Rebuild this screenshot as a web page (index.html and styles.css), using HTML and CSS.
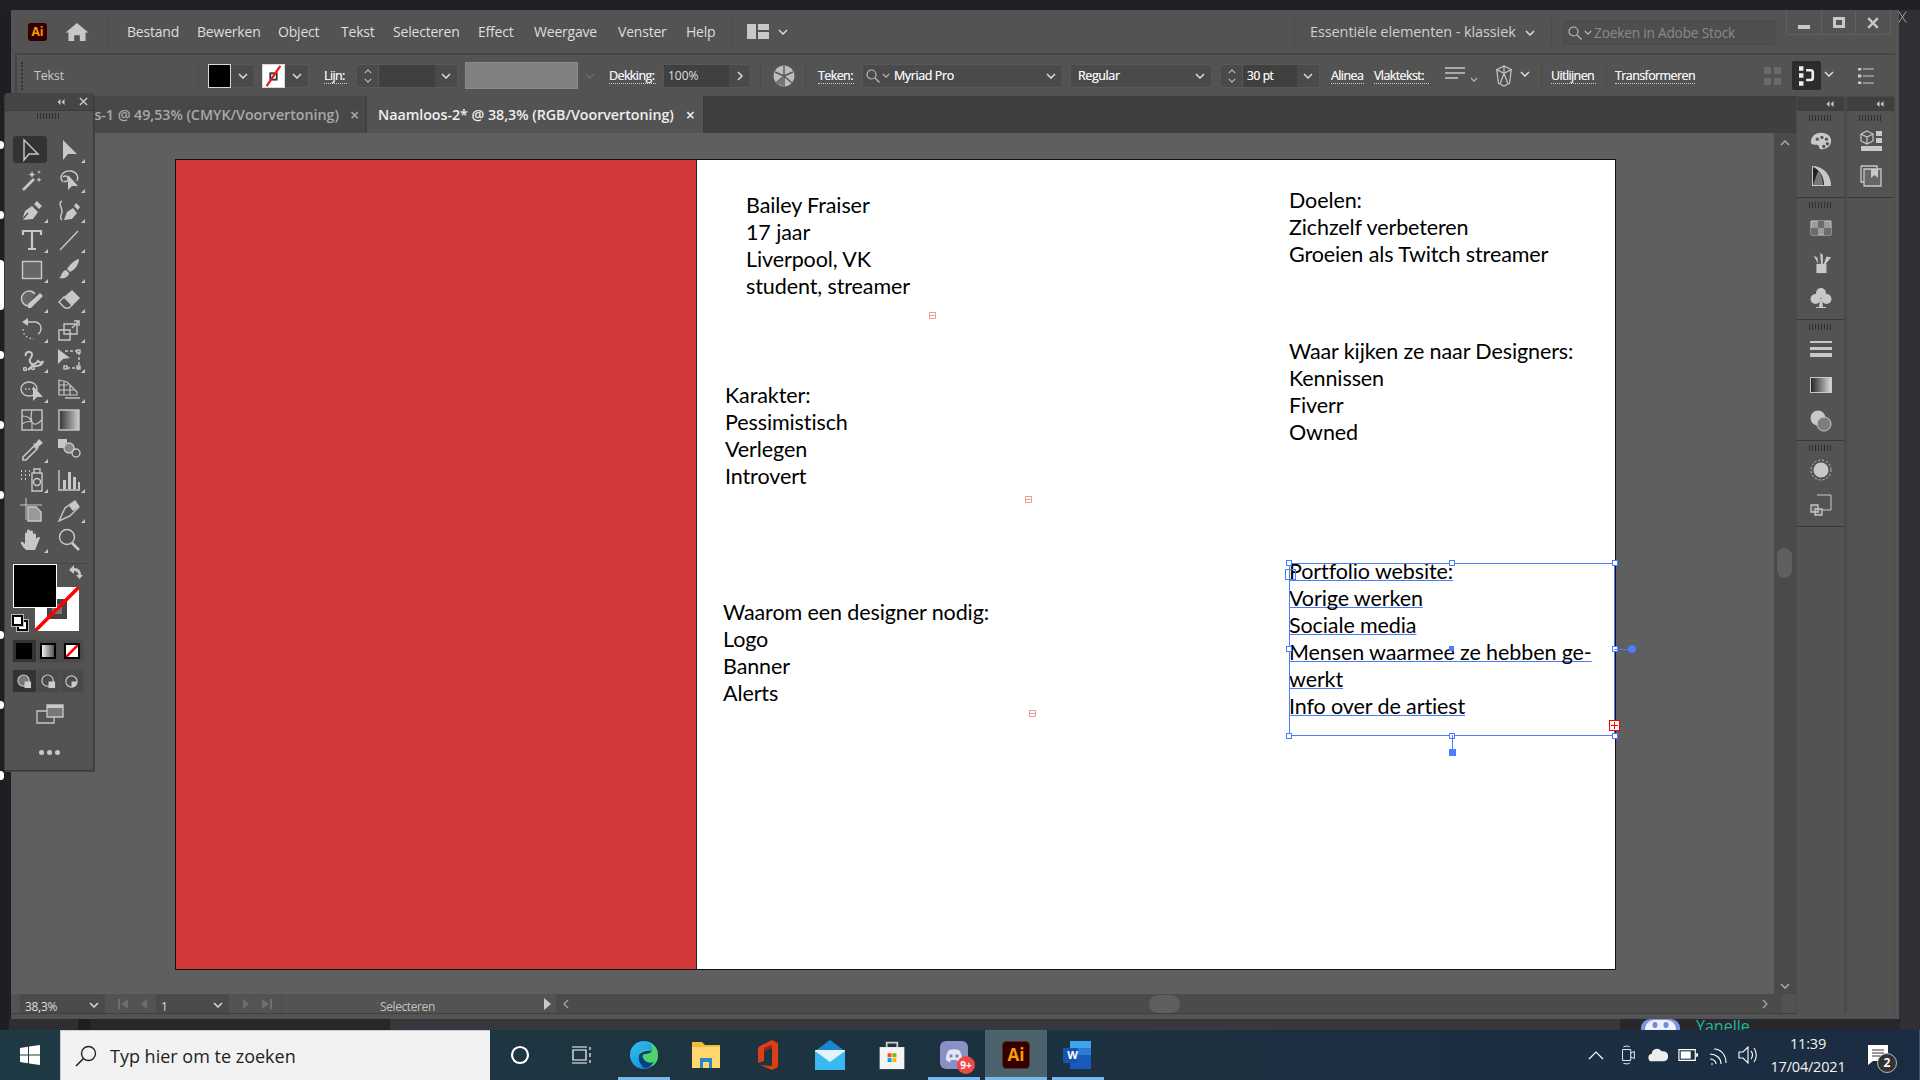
FILE: index.html
```html
<!DOCTYPE html>
<html lang="nl">
<head>
<meta charset="utf-8">
<title>Adobe Illustrator</title>
<link rel="stylesheet" href="styles.css">
</head>
<body>
<svg class="defs" aria-hidden="true">
  <symbol id="chev" viewBox="0 0 10 6"><path d="M1 1l4 4 4-4" fill="none" stroke="currentColor" stroke-width="1.5"/></symbol>
  <symbol id="up" viewBox="0 0 10 6"><path d="M1 5l4-4 4 4" fill="none" stroke="currentColor" stroke-width="1.5"/></symbol>
  <symbol id="mag" viewBox="0 0 14 14"><circle cx="5.5" cy="5.5" r="4.5" fill="none" stroke="currentColor" stroke-width="1.2"/><path d="M9 9l4.5 4.5" stroke="currentColor" stroke-width="1.3"/></symbol>
  <symbol id="dbl" viewBox="0 0 8 6"><path d="M3.5 0L0.5 3l3 3zM7.5 0L4.5 3l3 3z" fill="currentColor"/></symbol>
</svg>

<div class="screen">
  <div class="band-top"></div>
  <div class="mid">
    <div class="edge-left"></div>
    <main class="window">
      <header class="menubar">
        <div class="ai-logo">Ai</div>
        <svg class="home" viewBox="0 0 24 19"><path d="M12 0L0 10h3v9h6v-6h6v6h6v-9h3z" fill="#c8c8c8"/></svg>
        <span class="vsep sep-a"></span>
        <nav class="menu">
          <span class="m1">Bestand</span><span class="m2">Bewerken</span><span class="m3">Object</span><span class="m4">Tekst</span><span class="m5">Selecteren</span><span class="m6">Effect</span><span class="m7">Weergave</span><span class="m8">Venster</span><span class="m9">Help</span>
        </nav>
        <span class="vsep sep-b"></span>
        <svg class="layout-ic" viewBox="0 0 22 15"><path d="M0 0h9v15H0zM11 0h11v6H11zM11 8h11v7H11z" fill="#c8c8c8"/></svg>
        <svg class="chev-s layout-chev"><use href="#chev"/></svg>
        <span class="vsep sep-c"></span>
        <span class="workspace">Essentiële elementen - klassiek</span>
        <svg class="chev-s ws-chev"><use href="#chev"/></svg>
        <span class="vsep sep-d"></span>
        <div class="stock"><svg class="mag"><use href="#mag"/></svg><svg class="chev-t"><use href="#chev"/></svg><span>Zoeken in Adobe Stock</span></div>
        <div class="winbtns">
          <span class="wb"><i class="wb-min"></i></span>
          <span class="wb wb-mid"><i class="wb-max"></i></span>
          <span class="wb"><svg class="wb-x" viewBox="0 0 10 10"><path d="M1 1l8 8M9 1l-8 8" stroke="#c8c8c8" stroke-width="2"/></svg></span>
        </div>
      </header>

      <section class="options">
        <span class="grip-v"></span>
        <span class="o-tekst">Tekst</span>
        <div class="combo o-fill"><span class="swatch swatch-k"></span><svg class="chev-s"><use href="#chev"/></svg></div>
        <div class="combo o-stroke"><span class="swatch swatch-none"><svg viewBox="0 0 23 24"><rect x="8" y="9" width="7" height="7" fill="none" stroke="#333" stroke-width="2"/><path d="M4 23L19 1" stroke="#e81c1c" stroke-width="2.5"/></svg></span><svg class="chev-s"><use href="#chev"/></svg></div>
        <span class="lbl o-lijn">Lijn:</span>
        <div class="combo o-weight"><span class="stepper"><svg class="chev-t"><use href="#up"/></svg><svg class="chev-t"><use href="#chev"/></svg></span><span class="fld"></span><svg class="chev-s"><use href="#chev"/></svg></div>
        <div class="profile"></div>
        <svg class="chev-s chev-dim"><use href="#chev"/></svg>
        <span class="lbl o-dek">Dekking:</span>
        <div class="combo o-opac"><span class="fld fld-text">100%</span><svg class="chev-r" viewBox="0 0 6 10"><path d="M1 1l4 4-4 4" fill="none" stroke="#ddd" stroke-width="1.5"/></svg></div>
        <span class="vsep o-sep1"></span>
        <svg class="o-globe" viewBox="0 0 22 22"><circle cx="11" cy="11" r="10.5" fill="#bdbdbd"/><path d="M11 11L11 1M11 11L20 7M11 11L19 18M11 11L11 21M11 11L3 18M11 11L2 7" stroke="#555" stroke-width="1.4"/><path d="M11 11L3 18A10 10 0 0 0 11 21z" fill="#777"/></svg>
        <span class="vsep o-sep2"></span>
        <span class="lbl o-teken">Teken:</span>
        <div class="combo o-font"><svg class="mag"><use href="#mag"/></svg><svg class="chev-t"><use href="#chev"/></svg><span class="fld-name">Myriad Pro</span><svg class="chev-s"><use href="#chev"/></svg></div>
        <div class="combo o-style"><span class="fld-name">Regular</span><svg class="chev-s"><use href="#chev"/></svg></div>
        <div class="combo o-size"><span class="stepper"><svg class="chev-t"><use href="#up"/></svg><svg class="chev-t"><use href="#chev"/></svg></span><span class="fld-name">30 pt</span><svg class="chev-s"><use href="#chev"/></svg></div>
        <span class="lbl o-alinea">Alinea</span>
        <span class="lbl o-vlak">Vlaktekst:</span>
        <svg class="o-lines" viewBox="0 0 20 12"><path d="M0 1h20M0 6h20M0 11h13" stroke="#c8c8c8" stroke-width="1.6"/></svg>
        <svg class="chev-t o-lines-c"><use href="#chev"/></svg>
        <svg class="o-shield" viewBox="0 0 20 24"><path d="M10 1l8 4-2 15-6 3-6-3-2-15zM10 1v8M2 5l8 4 8-4M6 20l4-11 4 11" fill="none" stroke="#bdbdbd" stroke-width="1.4"/></svg>
        <svg class="chev-s o-shield-c"><use href="#chev"/></svg>
        <span class="vsep o-sep3"></span>
        <span class="lbl o-uit">Uitlijnen</span>
        <span class="vsep o-sep4"></span>
        <span class="lbl o-trans">Transformeren</span>
        <svg class="o-grid" viewBox="0 0 17 18"><path d="M0 0h7v7H0zM10 0h7v7h-7zM0 11h7v7H0zM10 11h7v7h-7z" fill="#6a6a6a"/></svg>
        <span class="o-snap"><svg viewBox="0 0 18 22"><path d="M0 0h5v5H0zM0 8h5v5H0zM0 17h5v5H0zM8 3h5a4 4 0 0 1 4 4v6a4 4 0 0 1-4 4H8v-3h5a1 1 0 0 0 1-1V7a1 1 0 0 0-1-1H8z" fill="#eee"/></svg></span>
        <svg class="chev-s o-snap-c"><use href="#chev"/></svg>
        <svg class="o-list" viewBox="0 0 16 16"><path d="M0 0h3v2H0zM5 1h11M0 7h3v2H0zM5 8h11M0 14h3v2H0zM5 15h11" fill="#c8c8c8" stroke="#c8c8c8"/></svg>
      </section>

      <div class="body-row">
        <div class="work">
          <div class="tabs">
            <div class="tab tab-off"><span>Naamloos-1 @ 49,53% (CMYK/Voorvertoning)</span><b>×</b></div>
            <div class="tab tab-on"><span>Naamloos-2* @ 38,3% (RGB/Voorvertoning)</span><b>×</b></div>
          </div>
          <div class="canvas-row">
            <div class="canvas">
              <div class="artboard">
                <div class="red"></div>
                <div class="tb tb-a"><p>Bailey Fraiser</p><p>17 jaar</p><p>Liverpool, VK</p><p>student, streamer</p></div>
                <div class="tb tb-b"><p>Karakter:</p><p>Pessimistisch</p><p>Verlegen</p><p>Introvert</p></div>
                <div class="tb tb-c"><p>Waarom een designer nodig:</p><p>Logo</p><p>Banner</p><p>Alerts</p></div>
                <div class="tb tb-d"><p>Doelen:</p><p>Zichzelf verbeteren</p><p>Groeien als Twitch streamer</p></div>
                <div class="tb tb-e"><p>Waar kijken ze naar Designers:</p><p>Kennissen</p><p>Fiverr</p><p>Owned</p></div>
                <div class="tb tb-f"><p><u>Portfolio website:</u></p><p><u>Vorige werken</u></p><p><u>Sociale media</u></p><p><u>Mensen waarmee ze hebben ge-</u></p><p><u>werkt</u></p><p><u>Info over de artiest</u></p></div>
                <span class="port port-a"></span><span class="port port-b"></span><span class="port port-c"></span>
                <div class="selbox">
                  <i class="h h-tl"></i><i class="h h-tm"></i><i class="h h-tr"></i>
                  <i class="h h-ml"></i><i class="h h-mr"></i>
                  <i class="h h-bl"></i><i class="h h-bm"></i><i class="h h-br"></i>
                  <i class="center-dot"></i>
                  <i class="inport"></i>
                  <i class="outport"></i>
                  <i class="rotline"></i><i class="rotdot"></i>
                  <i class="shline"></i><i class="shsq"></i>
                </div>
              </div>
            </div>
            <div class="vscroll">
              <svg class="chev-s vs-up"><use href="#up"/></svg>
              <span class="vs-thumb"></span>
              <svg class="chev-s vs-down"><use href="#chev"/></svg>
            </div>
          </div>
          <div class="status">
            <div class="st-field st-zoom"><span>38,3%</span><svg class="chev-s"><use href="#chev"/></svg></div>
            <svg class="st-nav st-first" viewBox="0 0 12 12"><path d="M1 1h2v10H1zM11 1v10L4 6z" fill="#6e6e6e"/></svg>
            <svg class="st-nav st-prev" viewBox="0 0 8 12"><path d="M7 1v10L1 6z" fill="#6e6e6e"/></svg>
            <div class="st-field st-page"><span>1</span><svg class="chev-s"><use href="#chev"/></svg></div>
            <svg class="st-nav st-next" viewBox="0 0 8 12"><path d="M1 1v10l6-5z" fill="#6e6e6e"/></svg>
            <svg class="st-nav st-last" viewBox="0 0 12 12"><path d="M1 1v10l7-5zM9 1h2v10H9z" fill="#6e6e6e"/></svg>
            <span class="st-sel">Selecteren</span>
            <svg class="st-arrow" viewBox="0 0 8 12"><path d="M1 0v12l7-6z" fill="#c8c8c8"/></svg>
            <div class="hscroll">
              <svg class="hs-arrow" viewBox="0 0 6 10"><path d="M5 1L1 5l4 4" fill="none" stroke="#aaa" stroke-width="1.2"/></svg>
              <span class="hs-thumb"></span>
              <svg class="hs-arrow" viewBox="0 0 6 10"><path d="M1 1l4 4-4 4" fill="none" stroke="#aaa" stroke-width="1.2"/></svg>
            </div>
          </div>
        </div>

        <aside class="dock">
          <div class="dock-col">
            <div class="dock-head"><svg class="dbl"><use href="#dbl"/></svg></div>
            <div class="dsec ds1"><span class="grip-h"></span>
              <svg class="d-ic" viewBox="0 0 24 20"><path d="M12 1C5 1 1 6 1 11c0 3 3 3 6 3 2 0 3 1 3 3 0 1 1 2 3 2 6 0 10-4 10-9 0-6-5-9-11-9z" fill="#c8c8c8"/><circle cx="8" cy="8" r="1.8" fill="#555"/><circle cx="13" cy="6" r="1.8" fill="#555"/><circle cx="18" cy="8" r="1.8" fill="#555"/><circle cx="19" cy="13" r="1.8" fill="#555"/><circle cx="15" cy="16" r="1.8" fill="#555"/></svg>
              <svg class="d-ic" viewBox="0 0 22 22"><path d="M2 1v20h19C21 9 13 1 2 1z" fill="#c8c8c8"/><path d="M3 2v18L14 20C14 12 10 5 3 2z" fill="#222"/><path d="M3 20L8 6c3 2 5 8 5 14z" fill="#777"/></svg>
            </div>
            <div class="dsec ds2"><span class="grip-h"></span>
              <svg class="d-ic" viewBox="0 0 22 16"><path d="M1 1h20v14H1z" fill="#9a9a9a" stroke="#c8c8c8"/><path d="M8 1h6v7H8zM1 8h7v7H1zM14 8h7v7h-7z" fill="#6c6c6c"/></svg>
              <svg class="d-ic" viewBox="0 0 22 24"><path d="M6 13h11v10H6z" fill="#c8c8c8"/><path d="M8 13L3 4l4 2zM11 13L10 1l3 2v10zM14 13l3-8 5 1-6 7z" fill="#c8c8c8"/></svg>
              <svg class="d-ic" viewBox="0 0 22 22"><circle cx="11" cy="6" r="5" fill="#c8c8c8"/><circle cx="5.5" cy="12" r="5" fill="#c8c8c8"/><circle cx="16.5" cy="12" r="5" fill="#c8c8c8"/><path d="M10 12h2l1 8h3v1H6v-1h3z" fill="#c8c8c8"/></svg>
            </div>
            <div class="dsec ds3"><span class="grip-h"></span>
              <svg class="d-ic" viewBox="0 0 22 16"><path d="M0 0h22v2H0zM0 6h22v3H0zM0 12h22v4H0z" fill="#c8c8c8"/></svg>
              <svg class="d-ic" viewBox="0 0 22 16"><defs><linearGradient id="g1"><stop offset="0" stop-color="#222"/><stop offset="1" stop-color="#ddd"/></linearGradient></defs><rect x=".5" y=".5" width="21" height="15" fill="url(#g1)" stroke="#c8c8c8"/></svg>
              <svg class="d-ic" viewBox="0 0 22 22"><circle cx="8" cy="8" r="7.5" fill="#c8c8c8"/><circle cx="14" cy="14" r="7" fill="#7d7d7d" stroke="#c8c8c8"/></svg>
            </div>
            <div class="dsec ds4"><span class="grip-h"></span>
              <svg class="d-ic" viewBox="0 0 22 22"><circle cx="11" cy="11" r="7.5" fill="#c8c8c8"/><circle cx="11" cy="11" r="10" fill="none" stroke="#c8c8c8" stroke-dasharray="2 2"/></svg>
              <svg class="d-ic" viewBox="0 0 22 22"><path d="M7 1h14v15H9" fill="none" stroke="#c8c8c8"/><path d="M1 11h7v7H1zM5 15h7v6H5z" fill="#666" stroke="#c8c8c8" stroke-width="1.3"/></svg>
            </div>
            <div class="dsec ds-rest"></div>
          </div>
          <div class="dock-col">
            <div class="dock-head"><svg class="dbl"><use href="#dbl"/></svg></div>
            <div class="dsec ds1"><span class="grip-h"></span>
              <svg class="d-ic" viewBox="0 0 22 22"><path d="M7 1l6 3v7l-6 3-6-3V4zM1 4l6 3 6-3M7 7v7" fill="none" stroke="#c8c8c8" stroke-width="1.2"/><path d="M16 1h6v5h-6zM16 8h6v5h-6zM1 16h21v5H1z" fill="#c8c8c8"/></svg>
              <svg class="d-ic" viewBox="0 0 22 22"><path d="M1 1h16v3M1 1v16h3" fill="none" stroke="#c8c8c8" stroke-width="1.3"/><path d="M4 4h17v17H4z" fill="#666" stroke="#c8c8c8" stroke-width="1.3"/><path d="M11 4h7v9l-3.500-3L11 13z" fill="#c8c8c8"/></svg>
            </div>
            <div class="dsec ds-rest"></div>
          </div>
        </aside>
      </div>
    </main>
    <div class="edge-right">
      <svg class="stray" viewBox="0 0 10 14"><path d="M1 1l8 12M9 1L1 13" stroke="#aaa"/></svg>
    </div>
  </div>

  <div class="strip">
    <span class="s1"></span><span class="s2"></span><span class="s3"></span><span class="s4"></span><span class="s5"></span>
    <div class="s6"><svg class="dc-av" viewBox="0 0 39 11"><rect width="39" height="20" rx="9" fill="#7f93de"/><path d="M4 11C4 5 8 1 14 1h11c6 0 10 4 10 10z" fill="#eef0fa"/><ellipse cx="14" cy="6" rx="2.500" ry="3" fill="#7289da"/><ellipse cx="25" cy="6" rx="2.500" ry="3" fill="#7289da"/></svg><span class="dc-name">Yanelle</span></div>
    <span class="s7"></span>
  </div>

  <footer class="taskbar">
    <div class="tb-start"><svg viewBox="0 0 20 20"><path d="M0 3l8-1.200V9.500H0zM9 1.600L20 0v9.500H9zM0 10.500h8v7.700L0 17zM9 10.500h11V20L9 18.400z" fill="#fff"/></svg></div>
    <div class="tb-search">
      <svg viewBox="0 0 22 22"><circle cx="13.500" cy="8.500" r="7" fill="none" stroke="#222" stroke-width="1.400"/><path d="M8.500 13.500L1 21" stroke="#222" stroke-width="1.600"/></svg>
      <span>Typ hier om te zoeken</span>
    </div>
    <div class="tb-app"><svg viewBox="0 0 20 20" class="ic20"><circle cx="10" cy="10" r="8" fill="none" stroke="#fff" stroke-width="2.200"/></svg></div>
    <div class="tb-app"><svg viewBox="0 0 20 20" class="ic20"><path d="M1 5h13v10H1zM0 2h15M0 18h15M18 2v3M18 8v4M18 15v3" fill="none" stroke="#fff" stroke-width="1.200"/></svg></div>
    <div class="tb-app active"><svg viewBox="0 0 30 30" class="ic30"><defs><linearGradient id="ed" x1="0" y1="0" x2="1" y2="1"><stop offset="0" stop-color="#35c1f1"/><stop offset=".6" stop-color="#1b9de2"/><stop offset="1" stop-color="#0c59a4"/></linearGradient></defs><circle cx="15" cy="15" r="14" fill="url(#ed)"/><path d="M29 15C29 6 21 1 14 1c8 0 10 6 9 10-4-3-13-2-13 5 0 6 7 10 13 10 4-2 6-6 6-11z" fill="#4fd36f"/><path d="M10 16c0-4 8-6 13-5-1 2-4 3-7 3-2 0-3 2-2 4 2 4 7 6 11 4-3 4-6 6-10 6-3-3-6-7-5-12z" fill="#0b3f7c"/></svg></div>
    <div class="tb-app"><svg viewBox="0 0 28 30" class="ic30"><path d="M0 2h10l3 3h15v23H0z" fill="#f2bd3a"/><path d="M0 7h28v21H0z" fill="#ffd76a"/><path d="M8 18h12v10h-3v-6h-6v6H8z" fill="#2a86d0"/></svg></div>
    <div class="tb-app"><svg viewBox="0 0 24 30" class="ic30"><path d="M4 6L16 0l6 3v24l-6 3L4 25l12 1V5L8 8v13l-6 2V8z" fill="#dc3e15"/><path d="M8 8l8-3v3L8 11z" fill="#a81f1f"/></svg></div>
    <div class="tb-app"><svg viewBox="0 0 30 30" class="ic30"><path d="M15 0L30 11v19H0V11z" fill="#1a86d0"/><path d="M0 11h30v19H0z" fill="#3ab8ef"/><path d="M0 11l15 11 15-11v-1H0z" fill="#e3f3fb"/></svg></div>
    <div class="tb-app"><svg viewBox="0 0 30 34" class="ic30"><path d="M9 8V3h12v5" fill="none" stroke="#ccc" stroke-width="2"/><path d="M1 8h28v25H1z" fill="#f4f4f4"/><path d="M10 15h4.500v4.500H10z" fill="#f25022"/><path d="M15.500 15H20v4.500h-4.500z" fill="#7fba00"/><path d="M10 20.500h4.500V25H10z" fill="#00a4ef"/><path d="M15.500 20.500H20V25h-4.500z" fill="#ffb900"/></svg></div>
    <div class="tb-app active"><span class="dc-wrap"><svg viewBox="0 0 28 28" class="ic28"><rect width="28" height="28" rx="6" fill="#8a8fc4"/><path d="M6 19c0-6 2-9 3-10 3-1 7-1 10 0 1 1 3 4 3 10-2 1.500-3 2-4 2l-1-2h-6l-1 2c-1 0-2-.5-4-2z" fill="#e6e6f2"/><circle cx="11" cy="15" r="1.700" fill="#7289da"/><circle cx="17" cy="15" r="1.700" fill="#7289da"/></svg><b class="dc-badge">9+</b></span></div>
    <div class="tb-app active focus"><div class="ai-task">Ai</div></div>
    <div class="tb-app active"><svg viewBox="0 0 30 30" class="ic30"><path d="M7 1h21v28H7z" fill="#185abd"/><path d="M7 1h21v7H7z" fill="#41a5ee"/><path d="M7 8h21v7H7z" fill="#2b7cd3"/><rect x="0" y="8" width="15" height="15" rx="1" fill="#1555ae"/></svg><b class="w-letter">W</b></div>
    <div class="tray">
      <svg class="chev-up" viewBox="0 0 16 9"><path d="M1 8l7-7 7 7" fill="none" stroke="#fff" stroke-width="1.200"/></svg>
      <svg class="tr-ic" viewBox="0 0 16 22"><path d="M2 5h9v12H2z" fill="none" stroke="#fff"/><path d="M11 9l4-2v8l-4-2M3 2c2-1 5-1 7 0M3 20c2 1 5 1 7 0" fill="none" stroke="#fff"/></svg>
      <svg class="tr-ic" viewBox="0 0 22 16"><path d="M5 15a4 4 0 0 1-1-8 6 6 0 0 1 11-3 5 5 0 0 1 3 11z" fill="#eee"/></svg>
      <svg class="tr-ic" viewBox="0 0 22 16"><path d="M1 2h18v12H1z" fill="none" stroke="#fff" stroke-width="1.300"/><path d="M3 4h11v8H3z" fill="#fff"/><path d="M20 6h2v4h-2z" fill="#fff"/></svg>
      <svg class="tr-ic" viewBox="0 0 20 20"><path d="M3 19h2M2 14c3 0 6 2 6 5M2 9c6 0 11 4 11 10M6 4c7 0 12 6 12 14" fill="none" stroke="#fff" stroke-width="1.100"/></svg>
      <svg class="tr-ic" viewBox="0 0 20 20"><path d="M1 7h4l5-5v16l-5-5H1z" fill="none" stroke="#fff" stroke-width="1.100"/><path d="M13 6c2 2 2 6 0 8M16 3c3 4 3 10 0 14" fill="none" stroke="#fff" stroke-width="1.100"/></svg>
      <div class="clock"><span>11:39</span><span>17/04/2021</span></div>
      <div class="notif"><svg viewBox="0 0 20 20"><path d="M0 0h20v16H5l-5 4z" fill="#fff"/><path d="M4 5h12M4 8h12M4 11h12" stroke="#333"/></svg><b>2</b></div>
    </div>
  </footer>

  <!-- floating tool panel -->
  <div class="toolpanel">
    <div class="tp-head"><svg class="dbl"><use href="#dbl"/></svg><svg class="tp-x" viewBox="0 0 10 10"><path d="M1 1l8 8M9 1l-8 8" stroke="#c8c8c8" stroke-width="1.600"/></svg></div>
    <span class="grip-h tp-grip"></span>
    <div class="tools">
      <div class="tool sel"><svg viewBox="0 0 24 24"><path d="M6 2v20l5-6h9z"/></svg></div>
      <div class="tool more"><svg viewBox="0 0 24 24"><path class="f" d="M6 2v20l5-6h9z"/></svg></div>
      <div class="tool"><svg viewBox="0 0 24 24"><path d="M3 22L14 11" stroke-width="2.600"/><path class="f" d="M12 3l1 2.500 2.500 1-2.500 1-1 2.500-1-2.500L8.500 6.500l2.500-1zM19 9l.7 2 2 .7-2 .7-.7 2-.7-2-2-.7 2-.7zM19 2l.5 1.500L21 4l-1.500.5L19 6l-.5-1.500L17 4l1.500-.5z"/></svg></div>
      <div class="tool more"><svg viewBox="0 0 24 24"><path d="M6 14C1 8 7 2 14 3c6 1 8 6 6 10M6 9c2-2 5-1 5 2s-3 3-4 2"/><path class="f" d="M11 7v15l4-4 6 0z"/></svg></div>
      <div class="tool more"><svg viewBox="0 0 24 24"><path class="f" d="M2 22l3-9 7-5 6 6-5 7zM14 6l3-3 5 5-3 3z"/><path d="M2 22l6-7" stroke="#535353"/></svg></div>
      <div class="tool more"><svg viewBox="0 0 24 24"><path d="M5 3C0 5 6 10 5 14s-3 6 0 8"/><path class="f" d="M7 22l3-8 6-4 4 5-5 6zM17 8l2-3 4 4-2 3z"/></svg></div>
      <div class="tool more"><svg viewBox="0 0 24 24"><path d="M3 7V3h18v4M12 3v18M8 21h8" stroke-width="2.200"/></svg></div>
      <div class="tool more"><svg viewBox="0 0 24 24"><path d="M3 22L21 3"/></svg></div>
      <div class="tool more"><svg viewBox="0 0 24 24"><rect x="2.500" y="3.500" width="19" height="17" fill="#666"/></svg></div>
      <div class="tool more"><svg viewBox="0 0 24 24"><path class="f" d="M22 1c0 5-4 11-9 13l-3-3c3-5 8-9 12-10zM9 12l3 3c0 4-5 6-10 5 3-1 2-7 7-8z"/></svg></div>
      <div class="tool more"><svg viewBox="0 0 24 24"><path d="M8 18a7.500 7.500 0 1 1 7-12" fill="#666"/><path class="f" d="M8 20v-4L20 5l3 3-12 12z"/></svg></div>
      <div class="tool more"><svg viewBox="0 0 24 24"><path class="f" d="M7 9l8-7 8 8-8 8z"/><path d="M7 9l-5 5 6 6h4l3-3z"/></svg></div>
      <div class="tool more"><svg viewBox="0 0 24 24"><path d="M6 4h9a6 6 0 0 1 6 6c0 3-1 5-3 6"/><path class="f" d="M8 0v8L2 4z"/><path d="M3 11c0 6 5 10 11 10" stroke-dasharray="1.500 2.500"/></svg></div>
      <div class="tool more"><svg viewBox="0 0 24 24"><path d="M7 6h13v10H7zM2 12h11v10H2zM15 10l6-6M17 3h5v5"/></svg></div>
      <div class="tool more"><svg viewBox="0 0 24 24"><path d="M6 8c-2-4 5-6 6-2s-4 4-2 8 6 2 8-1c2 2 4 2 5 0-1 5-7 6-10 4l-5 5" stroke-width="2"/><circle cx="5" cy="21" r="1.500"/><circle cx="13" cy="20" r="1.500"/></svg></div>
      <div class="tool more"><svg viewBox="0 0 24 24"><path class="f" d="M1 1v15l5-5 7-1z"/><path d="M8 3h14v17H8" stroke-dasharray="3 2"/><rect x="20" y="2" width="3" height="3"/><rect x="20" y="18" width="3" height="3"/><rect x="7" y="18" width="3" height="3"/></svg></div>
      <div class="tool more"><svg viewBox="0 0 24 24"><ellipse cx="9" cy="11" rx="8" ry="7"/><path d="M5 11h8" stroke-dasharray="1.500 2"/><path class="f" d="M13 8v15l4-4h6z"/></svg></div>
      <div class="tool more"><svg viewBox="0 0 24 24"><path d="M2 2l8 2 10 10v3H2zM2 7h9M2 12h15M7 3v14M13 7v10" stroke-width="1.200"/><path d="M8 20h15" /></svg></div>
      <div class="tool"><svg viewBox="0 0 24 24"><rect x="2" y="2" width="20" height="20"/><path d="M2 8c6 0 8 2 10 6s6 2 10-2M12 2c-1 5-2 7 0 12v8M2 16c4-3 7-3 10-2" stroke-width="1.100"/></svg></div>
      <div class="tool"><svg viewBox="0 0 24 24"><defs><linearGradient id="g2"><stop offset="0" stop-color="#333"/><stop offset="1" stop-color="#ccc"/></linearGradient></defs><rect x="2" y="2" width="20" height="20" fill="url(#g2)"/></svg></div>
      <div class="tool more"><svg viewBox="0 0 24 24"><path d="M14 8L3 19v3h3L17 11z" stroke-width="1.600"/><path class="f" d="M13 6l3-1 3-4 4 4-4 3-1 3z"/></svg></div>
      <div class="tool"><svg viewBox="0 0 24 24"><path class="f" d="M1 1h9v4H8v5H1z"/><circle cx="12" cy="10" r="5" fill="#888"/><circle cx="19" cy="15" r="4"/></svg></div>
      <div class="tool more"><svg viewBox="0 0 24 24"><path d="M12 5h10v18H12zM14 5V1h6v4"/><circle cx="17" cy="14" r="3.500"/><path d="M1 3h1M5 3h1M9 3h1M1 7h1M5 7h1M9 7h1M1 11h1M5 11h1" stroke-width="1.800"/></svg></div>
      <div class="tool more"><svg viewBox="0 0 24 24"><path d="M2 2v20h21"/><path class="f" d="M6 12h3v9H6zM11 4h3v17h-3zM16 9h3v12h-3zM21 14h2v7h-2z"/></svg></div>
      <div class="tool"><svg viewBox="0 0 24 24"><path d="M0 7h22M6 0v22" stroke-width="1"/><path d="M8 9h8l5 5v9H8z" fill="#999" /></svg></div>
      <div class="tool more"><svg viewBox="0 0 24 24"><path d="M2 23L8 10 18 3l4 6-9 9z"/><path class="f" d="M12 8l6-5 4 6-6 4z"/></svg></div>
      <div class="tool more"><svg viewBox="0 0 24 24"><path class="f" d="M6 22c-3-3-6-7-5-8s3 1 4 2V6c0-2 2-2 2 0V3c0-2 3-2 3 0v1c0-2 3-2 3 0v3c0-2 3-2 3 0v4c1-2 4-3 4-1-2 4-3 8-5 12z"/></svg></div>
      <div class="tool"><svg viewBox="0 0 24 24"><circle cx="10" cy="9" r="7.500"/><path d="M15 15l7 7" stroke-width="2.600"/></svg></div>
    </div>
    <div class="tp-rule"></div>
    <div class="colors">
      <span class="c-stroke"><i></i><svg viewBox="0 0 44 44"><path d="M0 44L44 0" stroke="#f00" stroke-width="3.500"/></svg></span>
      <span class="c-fill"></span>
      <svg class="c-swap" viewBox="0 0 16 16"><path d="M2 6l5-5v3c5 0 7 3 7 7h2l-3.500 4L9 11h2.500c0-2-1.500-4-4.500-4v3z" fill="#c8c8c8"/></svg>
      <span class="c-def"><i class="d2"></i><i class="d1"></i></span>
    </div>
    <div class="seg seg-a">
      <span class="sg on"><i class="m-black"></i></span>
      <span class="sg"><i class="m-grad"></i></span>
      <span class="sg"><i class="m-none"><svg viewBox="0 0 14 14"><path d="M0 14L14 0" stroke="#f00" stroke-width="3"/></svg></i></span>
    </div>
    <div class="seg seg-b">
      <span class="sg on"><svg viewBox="0 0 16 16"><circle cx="7" cy="7" r="6" fill="#777" stroke="#ccc" stroke-width="1.200"/><rect x="8" y="8" width="7" height="7" fill="#ccc"/></svg></span>
      <span class="sg"><svg viewBox="0 0 16 16"><circle cx="7" cy="7" r="6" fill="none" stroke="#ccc" stroke-width="1.200"/><rect x="8" y="8" width="7" height="7" fill="#ccc"/></svg></span>
      <span class="sg"><svg viewBox="0 0 16 16"><circle cx="8" cy="8" r="6" fill="none" stroke="#ccc" stroke-width="1.200"/><path d="M8 8h6a6 6 0 0 1-6 6z" fill="#ccc"/></svg></span>
    </div>
    <svg class="screen-mode" viewBox="0 0 28 20"><path d="M1 7h17v12H1z" fill="none" stroke="#c8c8c8" stroke-width="1.300"/><path d="M11 1h16v12H11z" fill="#777" stroke="#c8c8c8" stroke-width="1.300"/><path d="M11 1h16v3H11z" fill="#c8c8c8"/></svg>
    <div class="dots"><i></i><i></i><i></i></div>
  </div>

  <i class="blob b1"></i><i class="blob b2"></i><i class="blob b3"></i><i class="blob b4"></i><i class="blob b5"></i><i class="blob b6"></i><i class="blob b7"></i><i class="blob b8"></i><i class="blob b9"></i>
</div>
</body>
</html>
```

FILE: styles.css
```css
*{box-sizing:border-box}
html,body{margin:0;padding:0;height:100%;overflow:hidden}
body{font-family:"Open Sans","Noto Sans",sans-serif;background:#1f2124;color:#ddd}
i{font-style:normal}
.defs{position:absolute;width:0;height:0}
.screen{position:relative;width:1920px;height:1080px;display:flex;flex-direction:column;overflow:hidden}
.band-top{height:10px;background:#1f2125;flex:none}
.mid{display:flex;height:1009px;flex:none}
.edge-left{width:11px;background:#1d1f22;flex:none}
.edge-right{flex:1;background:#2e3036;position:relative;overflow:visible}
.stray{position:absolute;left:-1px;top:0;width:9px;height:14px}
.window{width:1888px;flex:none;background:#535353;display:flex;flex-direction:column;padding-bottom:5px}
svg{display:block;flex:none}
.chev-s{width:10px;height:6px;color:#dcdcdc}
.chev-t{width:8px;height:5px;color:#bbb}
.mag{width:14px;height:14px;color:#bbb}

/* menu bar */
.menubar{height:43px;flex:none;display:flex;align-items:center;position:relative}
.ai-logo{width:19px;height:18px;margin-left:17px;background:#330000;border-radius:3px;color:#ff9a00;font:700 12px/18px "Open Sans",sans-serif;text-align:center}
.home{width:24px;height:18px;margin-left:18px}
.vsep{width:1px;height:26px;background:#4a4a4a;flex:none}
.sep-a{margin-left:18px}
.menu{display:flex;font-size:14px;color:#dedede;margin-left:19px;letter-spacing:-.2px}
.menu span{display:block;flex:none}
.m1{width:70px}.m2{width:81px}.m3{width:63px}.m4{width:52px}.m5{width:85px}.m6{width:56px}.m7{width:84px}.m8{width:68px}.m9{width:38px}
.sep-b{margin-left:7px}
.layout-ic{width:22px;height:15px;margin-left:15px}
.layout-chev{margin-left:9px}
.sep-c{margin-left:506px}
.workspace{font-size:14.5px;color:#cfcfcf;margin-left:15px;width:206px;white-space:nowrap;letter-spacing:-.1px}
.ws-chev{margin-left:9px;margin-top:3px}
.sep-d{margin-left:16px}
.stock{margin-left:11px;width:212px;height:25px;border:1px solid #4a4a4a;background:#4e4e4e;border-radius:3px;display:flex;align-items:center;padding-left:4px;gap:2px;font-size:13.7px;color:#8a8a8a;white-space:nowrap;margin-top:2px;letter-spacing:-.2px}
.winbtns{margin-left:11px;width:105px;height:24px;display:flex;border:1px solid #606060;border-top:0;border-radius:0 0 4px 4px;align-self:flex-start;margin-top:1px}
.wb{flex:1;display:flex;align-items:center;justify-content:center}
.wb-mid{border-left:1px solid #606060;border-right:1px solid #606060}
.wb-min{width:12px;height:4px;background:#c8c8c8;margin-top:8px}
.wb-max{width:12px;height:11px;border:3px solid #c8c8c8}
.wb-x{width:12px;height:12px}

/* options */
.options{height:43px;flex:none;display:flex;align-items:center;margin-left:4px;margin-right:4px;border-top:2px solid #454545;border-left:2px solid #454545;font-size:12.5px;color:#dedede;background:#535353}
.options>*{flex:none}
.grip-v{width:2px;height:28px;margin-left:4px;border-left:2px dotted #333}
.o-tekst{width:165px;margin-left:11px;color:#c8c8c8;letter-spacing:-.2px;height:26px;line-height:26px;border-right:1px solid #4a4a4a}
.combo{height:24px;display:flex;align-items:center;background:#4a4a4a;border:1px solid #585858;border-radius:3px;justify-content:space-between}
.combo>.chev-s{margin:0 6px}
.swatch{width:23px;height:24px;display:block;border:1px solid #d8d8d8}
.swatch-k{background:#000}
.swatch-none{background:#fff}
.swatch-none svg{width:100%;height:100%}
.o-fill{width:47px;margin-left:9px;border-left:0}
.o-stroke{width:47px;margin-left:7px;border-left:0}
.lbl{border-bottom:1px dotted #cfcfcf;line-height:15px;letter-spacing:-.6px;white-space:nowrap;display:block;color:#ededed;text-shadow:0 0 .6px #ededed}
.o-lijn{margin-left:15px;width:23px}
.stepper{width:22px;height:100%;display:flex;flex-direction:column;align-items:center;justify-content:center;gap:4px;border-right:1px solid #585858}
.fld{flex:1;height:100%;background:#404040;display:block}
.o-weight{width:102px;margin-left:9px}
.profile{width:113px;height:27px;background:#808080;margin-left:7px;border:1px solid #8a8a8a}
.chev-dim{color:#6a6a6a;margin-left:7px}
.o-dek{margin-left:14px;width:47px}
.o-opac{width:88px;margin-left:7px;justify-content:flex-start}
.fld-text{line-height:22px;padding-left:4px;color:#dedede;font-size:12px;width:65px;flex:none}
.chev-r{width:6px;height:10px;margin-left:8px}
.o-sep1{margin-left:9px}
.o-globe{width:22px;height:22px;margin-left:12px}
.o-sep2{margin-left:10px}
.o-teken{margin-left:12px;width:36px}
.o-font{width:201px;margin-left:8px;justify-content:flex-start;padding-left:3px;gap:2px}
.o-font .fld-name{margin-left:2px;flex:1}
.fld-name{font-size:12.5px;letter-spacing:-.4px;color:#f0f0f0;white-space:nowrap;text-shadow:0 0 .5px #f0f0f0}
.o-style{width:142px;margin-left:7px;padding-left:7px}
.o-size{width:100px;margin-left:8px}
.o-size .fld-name{background:#404040;flex:1;line-height:22px;padding-left:4px;font-size:12px}
.o-alinea{margin-left:11px;width:33px}
.o-vlak{margin-left:10px;width:55px}
.o-lines{width:20px;height:12px;margin-left:16px;margin-top:-6px}
.o-lines-c{margin-left:5px;margin-top:8px}
.o-shield{width:20px;height:22px;margin-left:16px}
.o-shield-c{margin-left:6px;margin-top:-4px}
.o-sep3{margin-left:11px}
.o-uit{margin-left:9px;width:45px}
.o-sep4{margin-left:10px}
.o-trans{margin-left:8px;width:80px}
.o-grid{width:17px;height:18px;margin-left:69px}
.o-snap{width:29px;height:29px;background:#2c2c2c;margin-left:11px;border-radius:2px;display:flex;align-items:center;justify-content:center}
.o-snap svg{width:16px;height:20px}
.o-snap-c{margin-left:3px;margin-top:-4px}
.o-list{width:16px;height:16px;margin-left:24px}

/* body */
.body-row{flex:1;display:flex;min-height:0}
.work{width:1785px;flex:none;display:flex;flex-direction:column;background:#3f3f3f}
.tabs{height:37px;flex:none;display:flex;background:#3f3f3f;gap:2px;padding-left:0}
.tab{display:flex;align-items:center;font-weight:600;font-size:14.3px;white-space:nowrap;letter-spacing:-.05px;overflow:hidden}
.tab b{font-weight:600;font-size:16px}
.tab-off{width:354px;background:#484848;color:#a8a8a8;justify-content:flex-end;padding-right:6px}
.tab-off b{margin-left:11px}
.tab-on{width:337px;background:#535353;color:#eee;padding-left:11px;border-right:1px solid #3a3a3a}
.tab-on b{margin-left:12px}
.canvas-row{height:861px;flex:none;display:flex}
.canvas{width:1763px;flex:none;background:#5f5f5f;padding:27px 0 0 165px}
.vscroll{flex:1;background:#4a4a4a;position:relative;display:flex;flex-direction:column;align-items:center;justify-content:space-between;padding:7px 0 5px;color:#aaa}
.vscroll .chev-s{color:#aaa}
.vs-thumb{position:absolute;left:3px;width:15px;top:415px;height:30px;border-radius:8px;background:#5f5f5f}
.artboard{position:relative;width:1439px;height:809px;background:#fff;box-shadow:0 0 0 1px #111}
.red{width:521px;height:100%;background:#d33939;border-right:1px solid #222}
.tb{position:absolute;color:#000;font-family:Lato,"Open Sans",sans-serif;font-size:21.5px;line-height:27px;white-space:nowrap;letter-spacing:-.1px}
.tb p{margin:0}
.tb u{text-decoration:underline;text-decoration-color:#4a7dff;text-decoration-thickness:1px;text-underline-offset:1px;text-decoration-skip-ink:none}
.tb-a{left:570px;top:32px}
.tb-b{left:549px;top:222px}
.tb-c{left:547px;top:439px}
.tb-d{left:1113px;top:27px}
.tb-e{left:1113px;top:178px}
.tb-f{left:1113px;top:398px}
.port{position:absolute;width:7px;height:7px;border:1px solid #f19a9a;background:linear-gradient(#f19a9a,#f19a9a) center/5px 1px no-repeat,#fff}
.port-a{left:753px;top:152px}
.port-b{left:849px;top:336px}
.port-c{left:853px;top:550px}
.selbox{position:absolute;left:1113px;top:403px;width:326px;height:173px;border:1px solid #4a7dff}
.h{position:absolute;width:6px;height:6px;background:#fff;border:1px solid #4a7dff}
.h-tl{left:-4px;top:-4px}.h-tm{left:159px;top:-4px}.h-tr{right:-4px;top:-4px}
.h-ml{left:-4px;top:82px}.h-mr{right:-4px;top:82px}
.h-bl{left:-4px;bottom:-4px}.h-bm{left:159px;bottom:-4px}.h-br{right:-4px;bottom:-4px}
.center-dot{position:absolute;left:159px;top:82px;width:5px;height:5px;background:#4a7dff}
.inport{position:absolute;left:-5px;top:5px;width:11px;height:11px;border:1px solid #4a7dff}
.outport{position:absolute;right:-6px;top:156px;width:11px;height:11px;border:1px solid #f00;background:linear-gradient(#f00,#f00) center/7px 1px no-repeat,linear-gradient(#f00,#f00) center/1px 7px no-repeat,#fff}
.rotline{position:absolute;left:100%;top:85px;width:15px;height:1px;background:#4a7dff}
.rotdot{position:absolute;left:calc(100% + 14px);top:81px;width:8px;height:8px;border-radius:50%;background:#4a7dff}
.shline{position:absolute;left:162px;top:100%;width:1px;height:14px;background:#4a7dff}
.shsq{position:absolute;left:159px;top:calc(100% + 14px);width:7px;height:7px;background:#4a7dff}

/* status */
.status{height:19px;flex:none;display:flex;align-items:center;background:#535353;font-size:12px;color:#ddd;padding-left:9px}
.status>*{flex:none}
.st-field{height:100%;display:flex;align-items:center;justify-content:space-between;background:#4a4a4a;border-radius:3px 3px 0 0;padding:6px 6px 0 5px;letter-spacing:-.3px;overflow:hidden}
.st-field .chev-s{margin-top:-4px}
.st-zoom{width:85px}
.st-page{width:73px;margin-left:8px}
.st-nav{height:12px}
.st-first{width:12px;margin-left:12px}
.st-prev{width:8px;margin-left:11px}
.st-next{width:8px;margin-left:13px}
.st-last{width:12px;margin-left:11px}
.st-sel{width:262px;padding-left:98px;margin-left:8px;border-left:1px solid #4a4a4a;color:#c0c0c0;letter-spacing:-.4px;padding-top:5px;line-height:15px;height:19px;overflow:hidden}
.st-arrow{width:8px;height:12px}
.hscroll{width:1226px;margin-left:5px;height:100%;background:#4b4b4b;display:flex;align-items:center;padding:0 14px 0 7px;position:relative;justify-content:space-between}
.hs-arrow{width:6px;height:10px}
.hs-thumb{position:absolute;left:593px;top:1px;width:31px;height:18px;border-radius:9px;background:#5f5f5f}

/* dock */
.dock{flex:1;display:flex;gap:3px;padding:1px 5px 0 1px;background:#4a4a4a;margin-right:4px;min-width:0}
.dock-col{width:47px;flex:none;display:flex;flex-direction:column;background:#3f3f3f}
.dock-head{height:14px;flex:none;background:#3f3f3f;display:flex;align-items:center;justify-content:flex-end;padding-right:10px;color:#c8c8c8}
.dbl{width:8px;height:6px;color:#c8c8c8}
.dsec{background:#535353;display:flex;flex-direction:column;align-items:center;flex:none;border-bottom:1px solid #383838;position:relative}
.ds1{height:87px;padding-top:19px;gap:13px;justify-content:flex-start}
.ds2{height:122px;padding-top:19px;gap:13px}
.ds3{height:121px;padding-top:18px;gap:14px}
.ds4{height:86px;padding-top:18px;gap:13px}
.ds-rest{flex:1;height:auto;border:0}
.d-ic{width:22px;height:22px}
.grip-h{position:absolute;top:4px;left:50%;margin-left:-12px;width:24px;height:6px;background:repeating-linear-gradient(90deg,#2f2f2f 0 1px,transparent 1px 3px)}

/* strip & taskbar */
.strip{height:11px;flex:none;display:flex}
.strip span{display:block;height:100%;flex:none}
.s1{width:9px;background:#1d1f22}.s2{width:69px;background:#2c2e32}.s3{width:12px;background:#1d1f22}.s4{width:300px;background:#26282c}.s5{width:1230px;background:#36383e}
.s6{width:280px;background:#26282d;display:flex;position:relative;overflow:visible;flex:none}
.s7{width:20px;background:#2e3036}
.dc-av{width:39px;height:11px;margin-left:21px}
.s6 .dc-name{color:#1fb89a;font-size:16px;line-height:14px;margin-left:16px;height:11px;overflow:hidden;display:block}
.taskbar{height:50px;flex:none;display:flex;align-items:center;background:linear-gradient(90deg,#1f3a44,#1d3240 50%,#1b2c42);position:relative}
.tb-start{width:60px;flex:none;display:flex;justify-content:center;align-items:center;padding-right:1px}
.tb-start svg{width:20px;height:20px}
.tb-search{width:430px;height:50px;flex:none;background:#f2f2f2;border-top:1px solid #ccc;border-left:1px solid #ccc;display:flex;align-items:center;padding-left:14px;color:#222;font-size:18px;margin-right:-1px}
.tb-search svg{width:22px;height:22px;margin-right:13px}
.tb-app{width:62px;height:50px;flex:none;display:flex;align-items:center;justify-content:center;position:relative}
.tb-app.active::after{content:"";position:absolute;left:5px;right:5px;bottom:0;height:3px;background:#76b9ed}
.tb-app.focus{background:#4c626c}
.tb-app.focus::after{left:0;right:0}
.ic20{width:20px;height:20px}
.ic30{width:30px;height:30px}
.ic28{width:28px;height:28px}
.dc-wrap{display:block;position:relative;width:28px;height:28px}
.dc-badge{position:absolute;right:-7px;bottom:-5px;width:18px;height:18px;border-radius:50%;background:#f04747;color:#fff;font:700 10px/18px "Open Sans",sans-serif;text-align:center}
.ai-task{width:28px;height:28px;background:#330000;border:1px solid #5a2a2a;border-radius:4px;color:#ff9a00;font:700 17px/26px "Open Sans",sans-serif;text-align:center}
.w-letter{position:absolute;left:18px;top:17px;width:15px;text-align:center;color:#fff;font:700 11px/15px "Open Sans",sans-serif}
.tray{margin-left:auto;display:flex;align-items:center;height:100%;padding-right:22px;border-right:1px solid #3a5a6a}
.chev-up{width:16px;height:9px;margin-right:14px}
.tr-ic{width:20px;height:20px;margin-right:10px}
.clock{width:82px;display:flex;flex-direction:column;align-items:center;font-size:14.5px;line-height:23px;color:#f2f2f2;margin-left:-1px;letter-spacing:-.2px}
.notif{position:relative;width:20px;height:20px;margin-left:19px;margin-right:9px}
.notif svg{width:20px;height:20px}
.notif b{position:absolute;left:9px;top:8px;width:20px;height:20px;border-radius:50%;background:#333;border:1px solid #bbb;color:#fff;font:700 12px/18px "Open Sans",sans-serif;text-align:center}

/* tool panel */
.toolpanel{position:absolute;left:4px;top:93px;width:90px;height:678px;background:#535353;border:1px solid #3a3a3a;border-top:0;box-shadow:1px 1px 0 #444;border-radius:4px 4px 0 0}
.tp-head{height:18px;background:#454545;display:flex;align-items:center;justify-content:flex-end;gap:14px;padding-right:5px;border-radius:4px 4px 0 0;border-bottom:1px solid #3c3c3c}
.tp-head .dbl{color:#c8c8c8}
.tp-x{width:9px;height:9px}
.tp-grip{top:20px;margin-left:-12px}
.tools{display:grid;grid-template-columns:37px 37px;grid-auto-rows:30px;padding:24px 0 0 8px}
.tool{position:relative;display:flex;align-items:center;justify-content:center}
.tool svg{width:24px;height:24px;fill:none;stroke:#c8c8c8;stroke-width:1.400}
.tool svg .f{fill:#c8c8c8;stroke:none}
.tool.sel{background:#333;border-radius:3px;height:27px;margin:1px 0;width:34px}
.tool.more::after{content:"";position:absolute;right:2px;bottom:2px;border:2.500px solid transparent;border-right-color:#c8c8c8;border-bottom-color:#c8c8c8}
.tp-rule{height:1px;background:#454545;margin:8px 6px 0 6px}
.colors{position:relative;height:68px;margin-top:0}
.c-fill{position:absolute;left:8px;top:0;width:44px;height:44px;background:#000;border:1px solid #fff;display:block}
.c-stroke{position:absolute;left:30px;top:23px;width:44px;height:44px;background:#fff;display:block}
.c-stroke i{position:absolute;left:12px;top:12px;width:20px;height:20px;border:5px solid #444;background:#777;display:block}
.c-stroke svg{position:absolute;inset:0;width:100%;height:100%}
.c-swap{position:absolute;left:62px;top:0;width:16px;height:16px}
.c-def{position:absolute;left:7px;top:51px;width:16px;height:16px;display:block}
.c-def i{position:absolute;display:block;width:11px;height:11px;border:2px solid #000;background:#fff;box-shadow:0 0 0 1px #bbb}
.d1{left:0;top:0}.d2{left:5px;top:5px}
.seg{display:flex;width:73px;height:24px;margin-left:7px;background:#4a4a4a;border-radius:3px;border:1px solid #4e4e4e}
.seg-a{margin-top:7px}
.seg-b{margin-top:6px}
.sg{flex:1;display:flex;align-items:center;justify-content:center;border-right:1px solid #535353}
.sg svg{width:15px;height:15px}
.sg.on{background:#333}
.seg-a .sg i{display:block;width:16px;height:16px;border:2px solid #000;position:relative}
.m-black{background:#000}
.m-grad{background:linear-gradient(90deg,#eee,#555)}
.m-none{background:#fff}
.m-none svg{width:100%;height:100%}
.screen-mode{width:28px;height:20px;margin:11px 0 0 31px}
.dots{display:flex;gap:3px;justify-content:center;margin-top:26px;margin-right:0}
.dots i{width:5px;height:5px;border-radius:50%;background:#c8c8c8;display:block}
.blob{position:absolute;left:-3px;width:7px;height:8px;background:#fff;border-radius:4px}
.b1{top:141px}.b2{top:211px}.b3{top:260px;height:50px}.b4{top:351px}.b5{top:421px}.b6{top:491px}.b7{top:631px}.b8{top:701px}.b9{top:771px;height:9px}
```
